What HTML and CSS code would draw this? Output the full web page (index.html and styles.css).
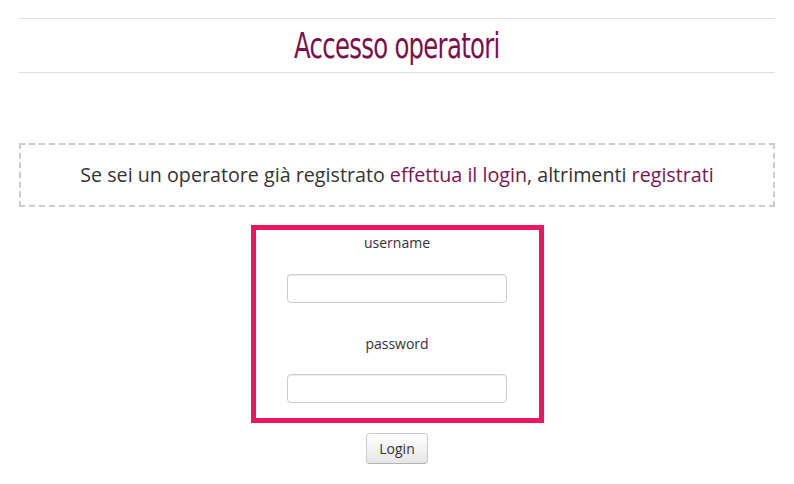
FILE: index.html
```html
<!DOCTYPE html>
<html lang="it">
<head>
  <meta charset="UTF-8">
  <meta name="viewport" content="width=device-width, initial-scale=1.0">
  <title>Accesso operatori</title>
  <link rel="stylesheet" href="styles.css">
</head>
<body>
  <div class="page">
    <div class="page-header">
      <h1 class="page-title">Accesso operatori</h1>
    </div>

    <div class="notice">
      Se sei un operatore già registrato <a href="#">effettua il login</a>, altrimenti <a href="#">registrati</a>
    </div>

    <form class="login-form" action="#">
      <div class="login-box">
        <label class="field-label" for="username">username</label>
        <input class="field-input" type="text" id="username" name="username">

        <label class="field-label" for="password">password</label>
        <input class="field-input" type="password" id="password" name="password">
      </div>
      <button class="btn" type="submit">Login</button>
    </form>
  </div>
</body>
</html>
```

FILE: styles.css
```css
body, html {
  margin: 0;
  padding: 0;
  background: #fff;
  font-family: 'Open Sans', sans-serif;
  color: #333;
}

.page {
  padding: 18px 19px 0;
}

.page-header {
  border-top: 1px solid #ddd;
  border-bottom: 1px solid #ddd;
  height: 53px;
  display: flex;
  align-items: center;
  justify-content: center;
}

/* no narrow webfont offline, so squeeze the regular one */
.page-title {
  margin: 0;
  font-family: 'DejaVu Sans', sans-serif;
  font-weight: normal;
  font-size: 35px;
  color: #7a0f4b;
  letter-spacing: -1px;
  transform: scaleX(0.695);
}

.notice {
  margin-top: 70px;
  border: 2px dashed #ccc;
  text-align: center;
  line-height: 60px;
  font-size: 19.7px;
  color: #333;
}

.notice a {
  color: #7a1550;
  text-decoration: none;
}

.login-form {
  display: flex;
  flex-direction: column;
  align-items: center;
  margin-top: 18px;
}

.login-box {
  width: 283px;
  border: 5px solid #f0145c;
  padding: 3px 0 15px;
  display: flex;
  flex-direction: column;
  align-items: center;
}

.field-label {
  font-size: 14px;
  line-height: 20px;
  margin-bottom: 21px;
}

.field-input {
  box-sizing: border-box;
  width: 220px;
  height: 29px;
  border: 1px solid #ccc;
  border-radius: 4px;
  box-shadow: inset 0 1px 1px rgba(0, 0, 0, 0.075);
  padding: 4px 6px;
  font-size: 14px;
  margin: 0;
}

.field-input + .field-label {
  margin-top: 31px;
  margin-bottom: 20px;
}

.btn {
  margin-top: 10px;
  box-sizing: border-box;
  width: 62px;
  height: 31px;
  font-family: 'Open Sans', sans-serif;
  font-size: 14px;
  color: #333;
  background: linear-gradient(#ffffff, #e6e6e6);
  border: 1px solid #ccc;
  border-bottom-color: #b3b3b3;
  border-radius: 4px;
  box-shadow: inset 0 1px 0 rgba(255, 255, 255, 0.2), 0 1px 2px rgba(0, 0, 0, 0.05);
}
```
